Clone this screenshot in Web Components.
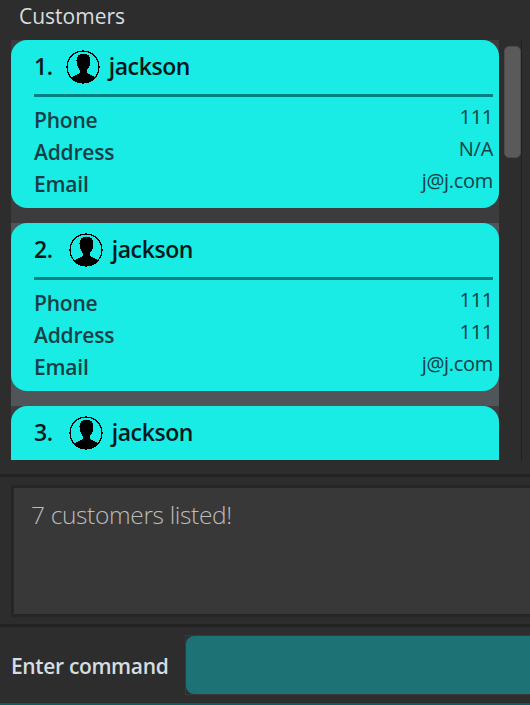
<!DOCTYPE html>
<html>
<head>
<meta charset="utf-8">
<style>
  html, body { margin: 0; height: 100%; background: #2d2d2d; overflow: hidden; }
</style>
</head>
<body>
<customer-app></customer-app>
<script>
const personIcon = `
  <svg width="34" height="34" viewBox="0 0 34 34" shape-rendering="crispEdges" aria-hidden="true">
    <defs><clipPath id="c"><circle cx="17" cy="17" r="16"/></clipPath></defs>
    <g clip-path="url(#c)">
      <path d="M17.500 3.500C13 3.500 10.300 6.500 10.500 11C10.700 14.500 12 17.500 13.500 19.500C14.300 20.600 14.300 22.500 13 23.500C11 25 6 26 4.500 28.500L3 34H32L30.500 28.500C29 26 24 25 22 23.500C20.700 22.500 20.700 20.600 21.500 19.500C23 17.500 24.300 14.500 24.500 11C24.700 6.500 22 3.500 17.500 3.500z" fill="#000"/>
    </g>
    <circle cx="17" cy="17" r="16" fill="none" stroke="#000" stroke-width="1.200"/>
  </svg>`;

class CustomerCard extends HTMLElement {
  connectedCallback() {
    const a = (n) => this.getAttribute(n) || "";
    const rows = this.hasAttribute("phone") ? `
        <hr>
        <div class="rows">
          <span class="label">Phone</span><span class="value">${a("phone")}</span>
          <span class="label">Address</span><span class="value">${a("address")}</span>
          <span class="label">Email</span><span class="value">${a("email")}</span>
        </div>` : "";
    this.attachShadow({ mode: "open" }).innerHTML = `
      <style>
        :host { display: block; padding-bottom: 15px; background: var(--row-bg); }
        .card {
          background: #18ece4;
          border-radius: 16px;
          height: 168px;
          box-sizing: border-box;
          padding: 9px 6px 0 23px;
        }
        .head {
          display: flex;
          align-items: center;
          height: 35px;
          font-size: 23px;
          font-weight: 600;
          color: #04181b;
          letter-spacing: -.4px;
        }
        .head span { position: relative; top: -1px; }
        .num { margin-right: var(--num-gap, 16px); }
        svg { margin-right: 9px; flex: none; }
        hr {
          border: 0;
          height: 3px;
          background: #008080;
          margin: 10px 0 6px;
        }
        .rows { display: grid; grid-template-columns: 1fr auto; }
        .label { font-size: 21px; font-weight: 600; color: #173f48; height: 32px; line-height: 35px; letter-spacing: -.2px; }
        .value { font-size: 20px; color: #173f48; text-align: right; height: 32px; line-height: 27px; letter-spacing: -.3px; }
      </style>
      <div class="card">
        <div class="head"><span class="num">${a("index")}.</span>${personIcon}<span>${a("name")}</span></div>
        ${rows}
      </div>`;
  }
}
customElements.define("customer-card", CustomerCard);

class CustomerList extends HTMLElement {
  constructor() {
    super();
    this.attachShadow({ mode: "open" }).innerHTML = `
      <style>
        :host { display: flex; height: 420px; padding-left: 11px; }
        .viewport { width: 488px; overflow: hidden; flex: none; }
        .bar { width: 17px; flex: none; border-right: 1px solid #1f1f1f; padding: 6px 0 0 5px; }
        .thumb { width: 15px; height: 110px; border-radius: 5px; background: #5a5a5a; border: 1px solid #4c4c4c; }
        ::slotted(customer-card:nth-child(odd)) { --row-bg: #3c3c3e; }
        ::slotted(customer-card:nth-child(even)) { --row-bg: #4f5558; }
      </style>
      <div class="viewport"><slot></slot></div>
      <div class="bar"><div class="thumb"></div></div>`;
  }
}
customElements.define("customer-list", CustomerList);

class ResultBox extends HTMLElement {
  constructor() {
    super();
    this.attachShadow({ mode: "open" }).innerHTML = `
      <style>
        :host {
          display: block;
          height: 132px;
          box-sizing: border-box;
          margin-left: 11px;
          background: #383838;
          border: 3px solid #262626;
          border-right: 0;
          padding: 9px 0 0 17px;
          font: 300 24.500px/36px "Open Sans", sans-serif;
          color: #bcbcbc;
          letter-spacing: -.35px;
        }
      </style>
      <slot></slot>`;
  }
}
customElements.define("result-box", ResultBox);

class CommandBar extends HTMLElement {
  constructor() {
    super();
    this.attachShadow({ mode: "open" }).innerHTML = `
      <style>
        :host { display: flex; align-items: center; height: 60px; padding-left: 11px; }
        label { width: 174px; flex: none; font-size: 21px; font-weight: 600; color: #d6dde0; letter-spacing: -.35px; position: relative; top: 1px; }
        .frame { flex: 1; height: 60px; box-sizing: border-box; border: 1px solid #3a3a3a; border-right: 0; }
        .input { height: 58px; background: #1c7274; border-radius: 8px 0 0 8px; }
      </style>
      <label><slot></slot></label>
      <div class="frame"><div class="input"></div></div>`;
  }
}
customElements.define("command-bar", CommandBar);

class CustomerApp extends HTMLElement {
  constructor() {
    super();
    this.attachShadow({ mode: "open" }).innerHTML = `
      <style>
        :host {
          display: block;
          width: 530px;
          height: 705px;
          overflow: hidden;
          background: #2d2d2d;
          font-family: "Open Sans", "Noto Sans", sans-serif;
        }
        .title { height: 40px; padding-left: 19px; font-size: 21px; line-height: 33px; color: #d9dedf; font-weight: 500; box-sizing: border-box; }
        .sep { height: 3px; background: #232323; }
        .bottom { border-bottom: 2px solid #0e5a5e; height: 78px; box-sizing: border-box; padding-top: 8px; }
      </style>
      <div class="title">Customers</div>
      <customer-list>
        <customer-card style="--num-gap:13px" index="1" name="jackson" phone="111" address="N/A" email="j@j.com"></customer-card>
        <customer-card index="2" name="jackson" phone="111" address="111" email="j@j.com"></customer-card>
        <customer-card index="3" name="jackson"></customer-card>
      </customer-list>
      <div style="height:14px"></div>
      <div class="sep"></div>
      <div style="height:8px"></div>
      <result-box>7 customers listed!</result-box>
      <div style="height:7px"></div>
      <div class="sep"></div>
      <div class="bottom"><command-bar>Enter command</command-bar></div>`;
  }
}
customElements.define("customer-app", CustomerApp);
</script>
</body>
</html>
